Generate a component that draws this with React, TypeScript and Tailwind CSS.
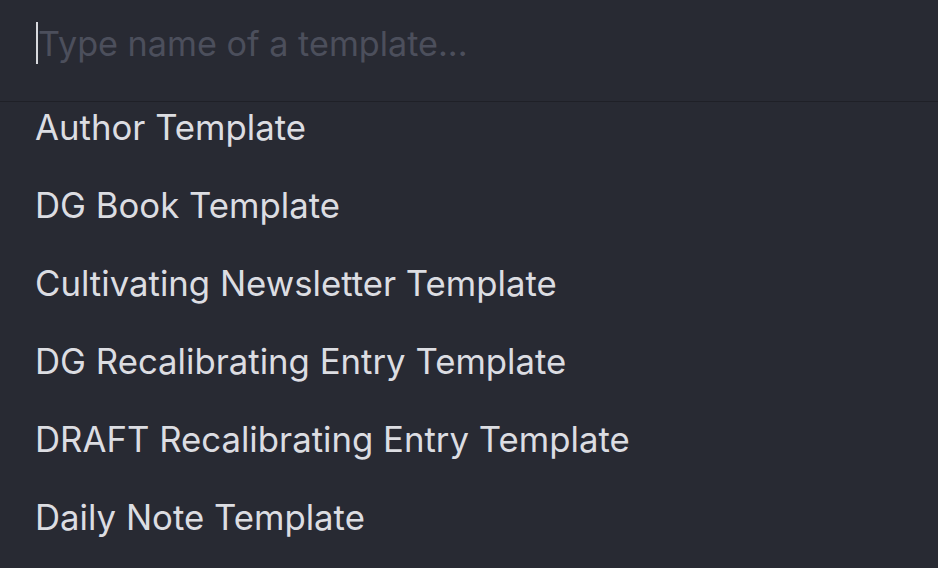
import React from "react";

const items = [
  "Author Template",
  "DG Book Template",
  "Cultivating Newsletter Template",
  "DG Recalibrating Entry Template",
  "DRAFT Recalibrating Entry Template",
  "Daily Note Template",
];

export default function App() {
  return (
    <div
      className="w-[938px] h-[568px] overflow-hidden bg-[#282a33] text-[#dcdde2]"
      style={{ fontFamily: "Inter, 'Noto Sans', sans-serif" }}
    >
      <div className="h-[102px] border-b border-[#1f2027] flex items-start pl-[36px] pt-[22px]">
        <div className="w-[2px] h-[42px] bg-[#d8d9de]" />
        <div className="text-[34.2px] leading-[42px] text-[#4c4f5c] mt-[1px]">
          Type name of a template...
        </div>
      </div>
      <div className="flex flex-col pl-[35px]">
        {items.map((t) => (
          <div key={t} className="h-[78px] pt-[7px] text-[34.75px] leading-[36px] whitespace-nowrap">
            {t}
          </div>
        ))}
      </div>
    </div>
  );
}
